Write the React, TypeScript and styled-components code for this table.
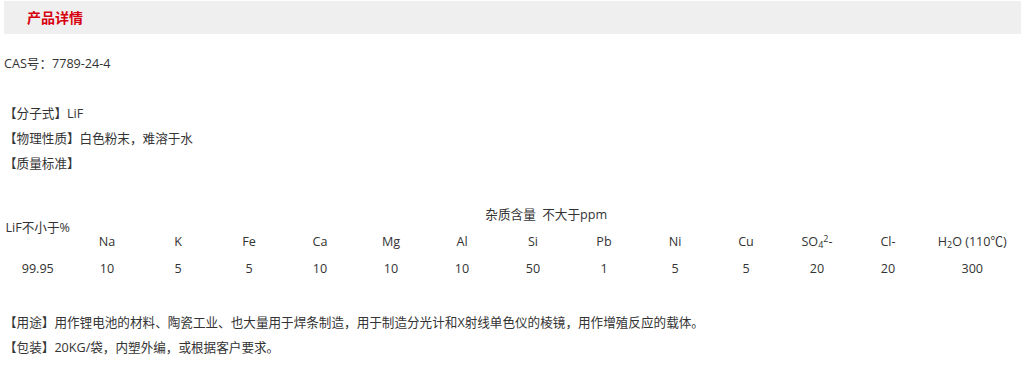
import React from "react";
import styled, { createGlobalStyle } from "styled-components";

const Global = createGlobalStyle`
  html, body { margin: 0; padding: 0; background: #fff; }
  body {
    font-family: "Open Sans", "Noto Sans CJK SC", sans-serif;
    color: #333;
  }
`;

const Page = styled.div`
  padding: 1px 3px 0 4px;
  font-size: 12.6px;
  line-height: 25px;
`;

const Header = styled.div`
  height: 33px;
  background: #efefef;
  display: flex;
  align-items: center;
  padding-left: 23px;
`;

const HeaderTitle = styled.h3`
  margin: 0;
  font-family: "Noto Sans CJK SC", sans-serif;
  font-size: 14px;
  font-weight: bold;
  color: #d7000f;
`;

const Content = styled.div`
  padding-top: 17px;
  display: flex;
  flex-direction: column;
`;

const Line = styled.p<{ $gapBefore?: number }>`
  margin: 0;
  margin-top: ${(p) => p.$gapBefore ?? 0}px;
  height: 25px;
  white-space: nowrap;
`;

const Table = styled.div`
  display: grid;
  grid-template-columns: 67.5px repeat(12, 71px) 1fr;
  grid-auto-rows: 27px;
  margin-top: 25px;
`;

const Cell = styled.div<{ $span?: number; $rows?: number }>`
  display: flex;
  align-items: center;
  justify-content: center;
  white-space: nowrap;
  grid-column: span ${(p) => p.$span ?? 1};
  grid-row: span ${(p) => p.$rows ?? 1};
`;

const CellText = styled.span`
  line-height: 18px;

  sub, sup {
    font-size: 9px;
    line-height: 0;
  }
  sup { vertical-align: 4px; }
  sub { vertical-align: -2px; }
`;

const elements: React.ReactNode[] = [
  "Na", "K", "Fe", "Ca", "Mg", "Al", "Si", "Pb", "Ni", "Cu",
  <>SO<sub>4</sub><sup>2</sup>-</>,
  "Cl-",
  <>H<sub>2</sub>O (110℃)</>,
];

const values = ["99.95", "10", "5", "5", "10", "10", "10", "50", "1", "5", "5", "20", "20", "300"];

export default function App() {
  return (
    <>
      <Global />
      <Page>
        <Header>
          <HeaderTitle>产品详情</HeaderTitle>
        </Header>
        <Content>
          <Line>CAS号：7789-24-4</Line>
          <Line $gapBefore={25}>【分子式】LiF</Line>
          <Line>【物理性质】白色粉末，难溶于水</Line>
          <Line>【质量标准】</Line>
          <Table>
            <Cell $rows={2}>
              <CellText>LiF不小于%</CellText>
            </Cell>
            <Cell $span={13}>
              <CellText>杂质含量&nbsp;&nbsp;不大于ppm</CellText>
            </Cell>
            {elements.map((e, i) => (
              <Cell key={i}>
                <CellText>{e}</CellText>
              </Cell>
            ))}
            {values.map((v, i) => (
              <Cell key={i}>
                <CellText>{v}</CellText>
              </Cell>
            ))}
          </Table>
          <Line $gapBefore={28}>
            【用途】用作锂电池的材料、陶瓷工业、也大量用于焊条制造，用于制造分光计和X射线单色仪的棱镜，用作增殖反应的载体。
          </Line>
          <Line>【包装】20KG/袋，内塑外编，或根据客户要求。</Line>
        </Content>
      </Page>
    </>
  );
}
